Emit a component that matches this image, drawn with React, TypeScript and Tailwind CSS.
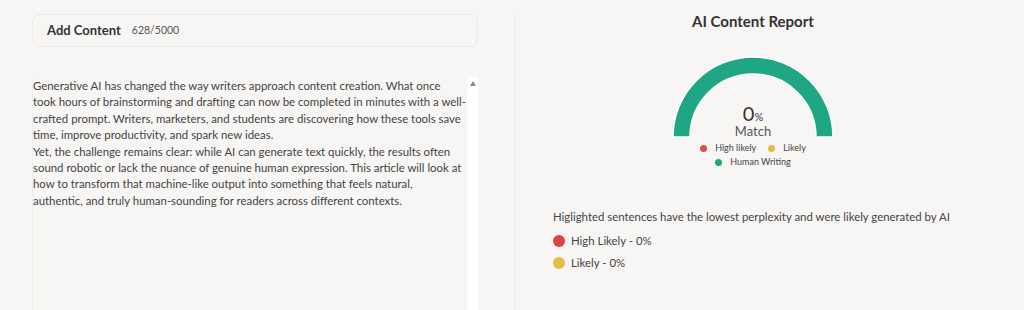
import React from 'react';

// lines as wrapped in the source editor
const lines = [
  'Generative AI has changed the way writers approach content creation. What once',
  'took hours of brainstorming and drafting can now be completed in minutes with a well-',
  'crafted prompt. Writers, marketers, and students are discovering how these tools save',
  'time, improve productivity, and spark new ideas.',
  'Yet, the challenge remains clear: while AI can generate text quickly, the results often',
  'sound robotic or lack the nuance of genuine human expression. This article will look at',
  'how to transform that machine-like output into something that feels natural,',
  'authentic, and truly human-sounding for readers across different contexts.',
];

const Gauge: React.FC = () => (
  <div className="relative w-[164px] h-[83px]">
    <svg width="164" height="83" viewBox="0 0 164 83" className="absolute left-0 top-0">
      <path
        d="M2 81 A80 80 0 0 1 162 81 L145 81 A63 63 0 0 0 19 81 Z"
        fill="#1fa685"
        stroke="#ffffff"
        strokeWidth="1.5"
      />
    </svg>
    <div className="absolute left-0 right-0 top-[47px] flex justify-center items-baseline text-[#333]">
      <span className="text-[20px] leading-none">0</span>
      <span className="text-[11px] leading-none">%</span>
    </div>
    <div className="absolute left-0 right-0 top-[69px] text-center text-[13px] leading-none text-[#555]">
      Match
    </div>
  </div>
);

export default function App() {
  return (
    <div
      className="w-[1024px] h-[310px] overflow-hidden bg-[#f7f6f4] flex"
      style={{ fontFamily: 'Lato, "Open Sans", sans-serif' }}
    >
      {/* left */}
      <div className="w-[515px] shrink-0 pl-[32px] pr-[37px] pt-[14px] flex flex-col">
        <div className="h-[33px] rounded-[8px] border border-[#ebeae7] bg-[#f7f6f4] flex items-center pl-[14px] gap-[11px]">
          <span className="text-[13px] font-bold text-[#333]">Add Content</span>
          <span className="text-[10.5px] text-[#555]">628/5000</span>
        </div>
        <div className="mt-[30px] flex-1 flex border-l border-[#eeedea] bg-[#f7f6f4]">
          <div className="flex-1 min-w-0 pt-[1px] text-[11.4px] leading-[16.4px] text-[#444] whitespace-nowrap">
            {lines.map((l, i) => (
              <div key={i}>{l}</div>
            ))}
          </div>
          <div className="w-[11px] bg-white flex justify-center pt-[4px]">
            <div className="w-0 h-0 border-l-[3.5px] border-r-[3.5px] border-b-[5px] border-l-transparent border-r-transparent border-b-[#8a8a8a]" />
          </div>
        </div>
      </div>

      {/* divider */}
      <div className="w-px bg-[#ebeae7] mt-[15px]" />

      {/* right */}
      <div className="flex-1 pl-[37px] pr-[71px] pt-[11px] flex flex-col">
        <h2 className="text-center text-[15px] leading-[20px] font-bold text-[#333]">AI Content Report</h2>
        <div className="flex flex-col items-center mt-[25px]">
          <Gauge />
          <div className="flex items-center gap-[12px] text-[9px] leading-[12px] text-[#444] mt-[3px]">
            <span className="flex items-center gap-[8px]">
              <span className="w-[7px] h-[7px] rounded-full bg-[#d9514e]" />
              High likely
            </span>
            <span className="flex items-center gap-[8px]">
              <span className="w-[7px] h-[7px] rounded-full bg-[#e4bb4b]" />
              Likely
            </span>
          </div>
          <div className="flex items-center gap-[8px] text-[9px] leading-[12px] text-[#444] mt-[2px]">
            <span className="w-[7px] h-[7px] rounded-full bg-[#1fa685]" />
            Human Writing
          </div>
        </div>
        <p className="mt-[41px] text-[11.4px] leading-[16px] text-[#444] whitespace-nowrap">
          Higlighted sentences have the lowest perplexity and were likely generated by AI
        </p>
        <div className="mt-[8px] flex items-center gap-[6px] text-[11.4px] leading-[16px] text-[#444]">
          <span className="w-[12px] h-[12px] rounded-full bg-[#d9453f]" />
          High Likely - 0%
        </div>
        <div className="mt-[6px] flex items-center gap-[6px] text-[11.4px] leading-[16px] text-[#444]">
          <span className="w-[12px] h-[12px] rounded-full bg-[#e4bd45]" />
          Likely - 0%
        </div>
      </div>
    </div>
  );
}
